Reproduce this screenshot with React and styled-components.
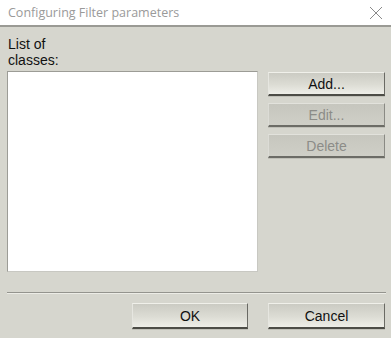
import React from 'react';
import styled, { createGlobalStyle } from 'styled-components';

const Global = createGlobalStyle`
  html, body { margin: 0; padding: 0; background: #d6d6ce; }
  body { width: 391px; height: 338px; overflow: hidden; }
`;

const Dialog = styled.div`
  width: 391px;
  height: 338px;
  background: #d6d6ce;
  display: flex;
  flex-direction: column;
  font-family: "Liberation Sans", Arial, sans-serif;
`;

const TitleBar = styled.div`
  height: 25px;
  background: #fff;
  border-bottom: 2px solid #9a9a94;
  display: flex;
  align-items: center;
  justify-content: space-between;
  padding: 0 5px 0 8px;
`;

const Title = styled.span`
  font-family: "Open Sans", "Noto Sans", sans-serif;
  font-size: 12.5px;
  color: #9a9a9a;
`;

const Close = styled.svg`
  width: 14px;
  height: 14px;
  margin-right: 3px;
`;

const Body = styled.div`
  flex: 1;
  padding: 9px 6px 0 7px;
  display: flex;
  flex-direction: column;
`;

const Top = styled.div`
  display: grid;
  grid-template-columns: 251px 117px;
  column-gap: 10px;
  grid-template-rows: auto auto;
`;

const Label = styled.div`
  grid-column: 1;
  font-size: 14px;
  line-height: 16px;
  color: #111;
  padding-left: 1px;
  margin-bottom: 3px;
`;

const ListBox = styled.div`
  grid-column: 1;
  grid-row: 2;
  height: 199px;
  background: #fff;
  border: 1px solid #9c9c96;
  border-right-color: #c8c8c2;
  border-bottom-color: #c8c8c2;
`;

const Side = styled.div`
  grid-column: 2;
  grid-row: 2;
  display: flex;
  flex-direction: column;
  gap: 7px;
  padding-top: 1px;
`;

const Button = styled.button`
  height: ${p => p.$h || 24}px;
  width: ${p => p.$w || 117}px;
  padding: 0;
  font-family: "Liberation Sans", Arial, sans-serif;
  font-size: 14px;
  color: ${p => (p.disabled ? '#8c8c88' : '#111')};
  background: ${p =>
    p.disabled
      ? 'linear-gradient(#c6c6be, #cfcfc7)'
      : 'linear-gradient(#cbcbc3 0%, #dcdcd4 55%, #eeeee8 100%)'};
  border-style: solid;
  border-width: 1px 1px 2px 1px;
  border-color: ${p =>
    p.disabled
      ? '#e2e2dc #8a8a84 #6c6c66 #dcdcd6'
      : '#f0f0ea #6a6a64 #4c4c46 #e6e6e0'};
  box-shadow: 0 1px 0 #c0c0b8;
`;

const Separator = styled.div`
  margin-top: 20px;
  margin-right: -1px;
  height: 1px;
  background: #94948e;
  border-bottom: 1px solid #ececE6;
`;

const Footer = styled.div`
  display: flex;
  justify-content: flex-end;
  gap: 20px;
  margin-top: 9px;
`;

export default function App() {
  return (
    <Dialog>
      <Global />
      <TitleBar>
        <Title>Configuring Filter parameters</Title>
        <Close viewBox="0 0 14 14">
          <path d="M1 1 L13 13 M13 1 L1 13" stroke="#8a8a8a" strokeWidth="1" fill="none" />
        </Close>
      </TitleBar>
      <Body>
        <Top>
          <Label>List of<br />classes:</Label>
          <ListBox />
          <Side>
            <Button>Add...</Button>
            <Button disabled>Edit...</Button>
            <Button disabled>Delete</Button>
          </Side>
        </Top>
        <Separator />
        <Footer>
          <Button $w={116} $h={26}>OK</Button>
          <Button $w={117} $h={26}>Cancel</Button>
        </Footer>
      </Body>
    </Dialog>
  );
}
